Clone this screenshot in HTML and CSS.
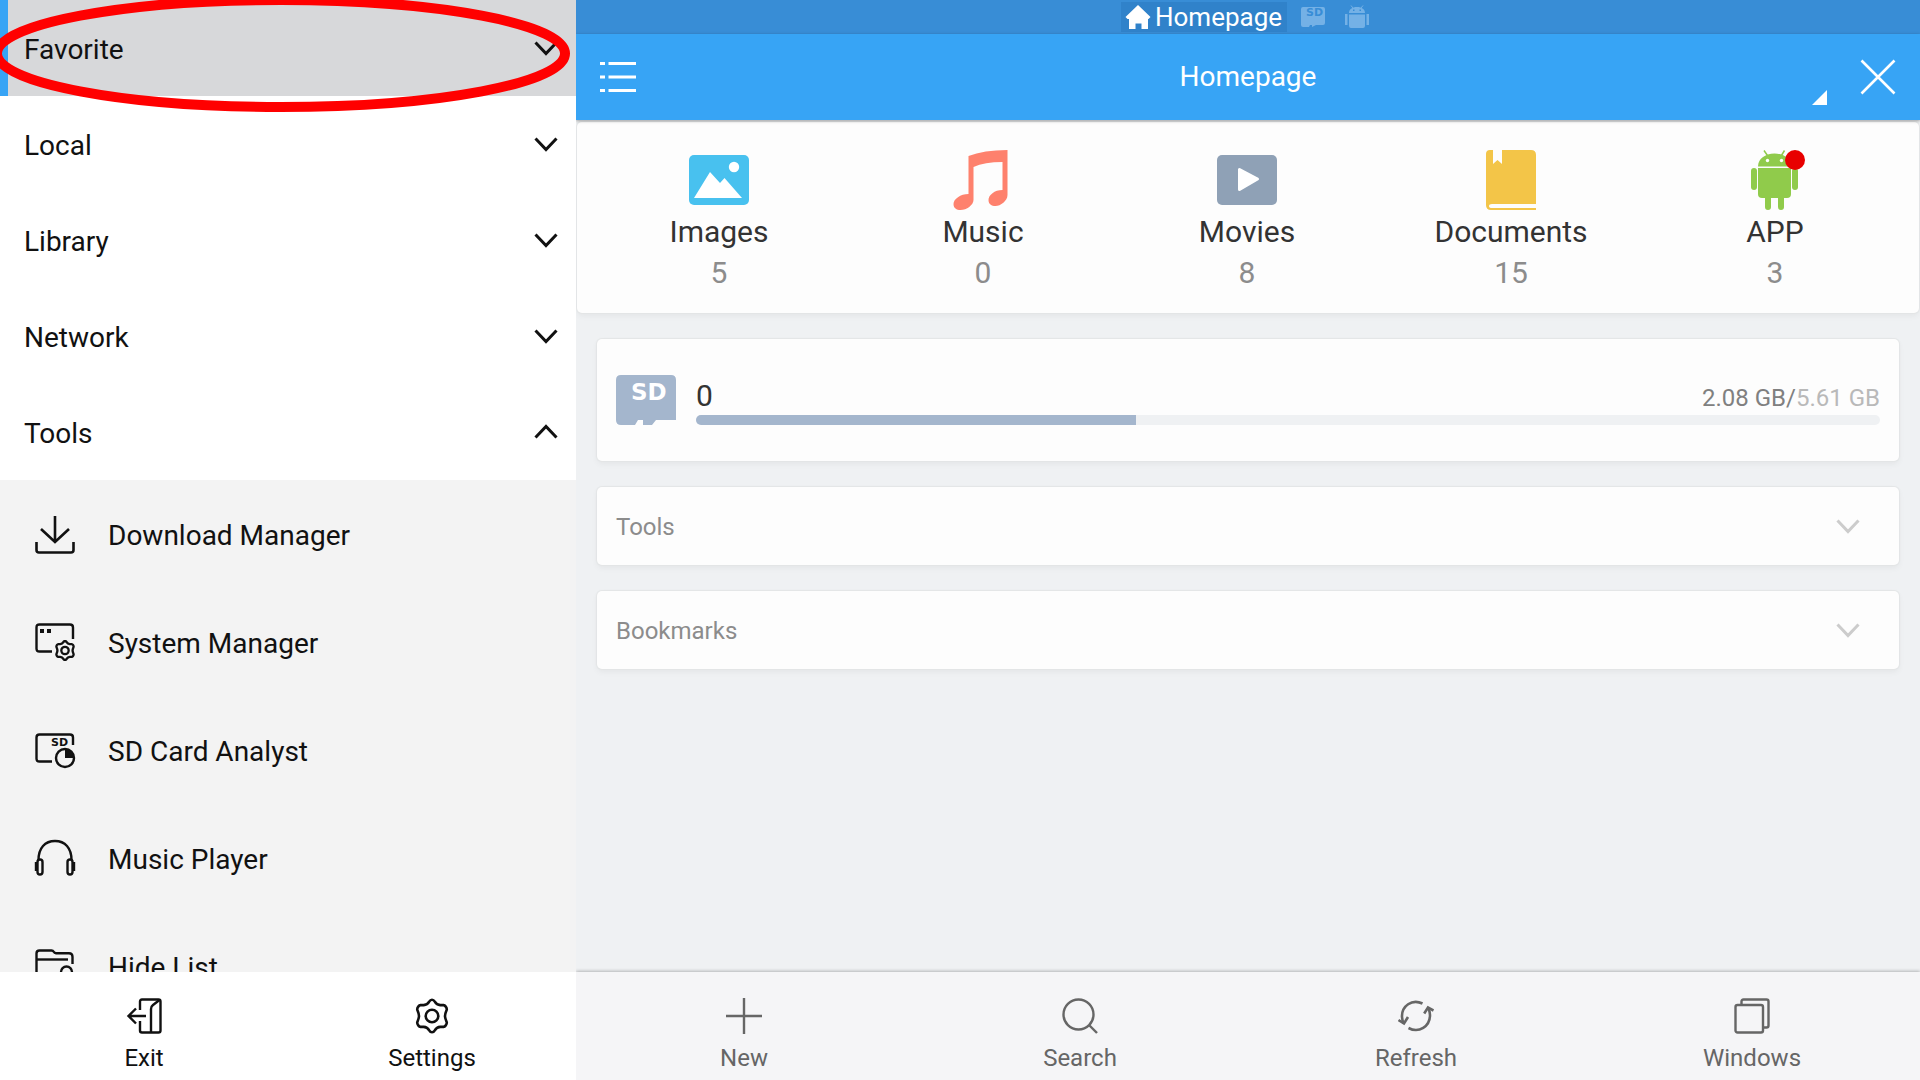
FILE: index.html
```html
<!DOCTYPE html>
<html lang="en">
<head>
<meta charset="utf-8">
<meta name="viewport" content="width=device-width, initial-scale=1">
<title>Homepage</title>
<link rel="stylesheet" href="styles.css">
</head>
<body>
<svg class="defs" aria-hidden="true">
  <symbol id="chevron" viewBox="0 0 24 24"><path d="M1.500 6.500 12 17.500 22.500 6.500" fill="none" stroke="currentColor" stroke-width="3"/></symbol>
  <symbol id="gear" viewBox="0 0 36 36">
    <path d="M18 1.700c1.200 0 2 .6 2.800 2 1.300 2.300 2.700 3.200 5.500 3.400h3.200c1.600.2 3.300 2.500 3.300 4.300 0 1-1.800 3.500-1.800 6.600s1.800 5.600 1.800 6.600c0 1.800-1.700 4.100-3.300 4.300h-3.200c-2.800.2-4.200 1.100-5.500 3.400-.8 1.400-1.600 2-2.800 2s-2-.6-2.800-2c-1.300-2.300-2.700-3.200-5.500-3.400H6.500c-1.600-.2-3.300-2.500-3.300-4.300 0-1 1.800-3.500 1.800-6.600s-1.800-5.600-1.800-6.600c0-1.800 1.700-4.100 3.300-4.300h3.200c2.800-.2 4.200-1.100 5.500-3.400.8-1.400 1.600-2 2.800-2z" fill="none" stroke="currentColor"/>
    <circle cx="18" cy="18" r="6.300" fill="none" stroke="currentColor"/>
  </symbol>
  <symbol id="robot" viewBox="0 0 60 60">
    <path d="M17 0.500 21.500 7M37.500 0.500 33.500 7" stroke="currentColor" stroke-width="1.500"/>
    <path d="M11 16.500C11 9 18 3.500 27.500 3.500S44 9 44 16.500z" fill="currentColor"/>
    <path d="M11 18h33v26q0 4-4 4H15q-4 0-4-4z" fill="currentColor"/>
    <rect x="4" y="18" width="6" height="22" rx="3" fill="currentColor"/>
    <rect x="45" y="18" width="6" height="22" rx="3" fill="currentColor"/>
    <path d="M18 46h6v11a3 3 0 0 1-6 0zM31 46h6v11a3 3 0 0 1-6 0z" fill="currentColor"/>
    <circle class="robot-eye" cx="20.500" cy="10.500" r="1.700"/><circle class="robot-eye" cx="34.500" cy="10.500" r="1.700"/>
  </symbol>
</svg>

<div class="app">
  <aside class="sidebar">
    <nav class="menu" aria-label="Locations">
      <button class="group group-active" type="button"><span>Favorite</span><svg class="chevron"><use href="#chevron"/></svg></button>
      <button class="group" type="button"><span>Local</span><svg class="chevron"><use href="#chevron"/></svg></button>
      <button class="group" type="button"><span>Library</span><svg class="chevron"><use href="#chevron"/></svg></button>
      <button class="group" type="button"><span>Network</span><svg class="chevron"><use href="#chevron"/></svg></button>
      <button class="group" type="button" aria-expanded="true"><span>Tools</span><svg class="chevron chevron-up"><use href="#chevron"/></svg></button>
      <div class="submenu">
        <a class="item" href="#download">
          <svg viewBox="0 0 40 40" fill="none" stroke="currentColor" stroke-width="2.600"><path d="M20 2v26M6 15l14 13 14-13"/><path d="M1.500 28v8q0 2.500 2.500 2.500h32q2.500 0 2.500-2.500v-8"/></svg>
          <span>Download Manager</span>
        </a>
        <a class="item" href="#system">
          <svg viewBox="0 0 40 40" fill="none" stroke="currentColor" stroke-width="2.400"><path d="M17 29.500H4.500q-3 0-3-3v-21q0-3 3-3H35q3 0 3 3V17"/><path d="M5 7h4v4H5zM12 7h4v4h-4z" fill="currentColor" stroke="none"/><use href="#gear" x="19" y="18" width="22" height="21" stroke-width="4"/></svg>
          <span>System Manager</span>
        </a>
        <a class="item" href="#sd-analyst">
          <svg viewBox="0 0 40 40" fill="none" stroke="currentColor" stroke-width="2.400"><path d="M17 31.500H4.500q-3 0-3-3v-21q0-3 3-3H35q3 0 3 3V15"/><circle cx="30" cy="28" r="9"/><path d="M30 19a9 9 0 0 1 9 9h-9z" fill="currentColor" stroke="none"/><text class="sd-text" x="16" y="15.500" font-size="11">SD</text></svg>
          <span>SD Card Analyst</span>
        </a>
        <a class="item" href="#music-player">
          <svg viewBox="0 0 40 40" fill="none" stroke="currentColor" stroke-width="2.400"><path d="M3.500 22C3.500 10 10 3 20 3s16.500 7 16.500 19"/><rect x="2.500" y="21.500" width="5" height="15" rx="2.500"/><rect x="32.500" y="21.500" width="5" height="15" rx="2.500"/><path d="M1 24v9M39 24v9"/></svg>
          <span>Music Player</span>
        </a>
        <a class="item" href="#hide-list">
          <svg viewBox="0 0 40 40" fill="none" stroke="currentColor" stroke-width="2.400"><path d="M20 36.500H4.500q-3 0-3-3V7.500q0-3 3-3h12q1.500 0 2.200 1.300T21 7.200h13q3.500 0 3.500 3.500V18"/><path d="M2 13.500h31"/><path d="M26 29v-3a5.500 5.500 0 0 1 11 0v3"/><rect x="24" y="29" width="15" height="9" rx="1"/></svg>
          <span>Hide List</span>
        </a>
      </div>
    </nav>
    <div class="toolbar toolbar-side">
      <button class="tool" type="button">
        <svg viewBox="0 0 36 36" fill="none" stroke="currentColor" stroke-width="2.400"><path d="M14 12V3.500q0-2 2-2h16.500q2 0 2 2v29q0 2-2 2H16q-2 0-2-2V23"/><path d="M33.500 2 27 7q-2 1.500-2 4v23"/><path d="M20 18H3M10 10.500 2.500 18l7.500 7.500"/></svg>
        <span>Exit</span>
      </button>
      <button class="tool" type="button">
        <svg viewBox="0 0 36 36" stroke-width="2.600"><use href="#gear"/></svg>
        <span>Settings</span>
      </button>
    </div>
    <svg class="marker" viewBox="0 0 576 113" aria-hidden="true"><ellipse cx="281" cy="53.500" rx="284" ry="53.500" fill="none" stroke="#f00" stroke-width="10"/></svg>
  </aside>

  <main class="main">
    <div class="tabs">
      <button class="tab tab-active" type="button">
        <svg viewBox="0 0 24 24"><path d="M12 0 24.500 12l-2 2H22v10h-6.500v-5.500h-6V24H3V14H1.500l-2-2z" fill="#fff"/></svg>
        <span>Homepage</span>
      </button>
      <button class="tab" type="button" aria-label="SD card">
        <svg viewBox="0 0 24 24"><path d="M2 2h20q2 0 2 2v14q0 2-2 2h-7l-4 2v-2H9l-1 2H2q-2 0-2-2V4q0-2 2-2z" fill="currentColor"/><text class="sd-text sd-tab" x="5" y="11" font-size="11">SD</text></svg>
      </button>
      <button class="tab" type="button" aria-label="Apps">
        <svg viewBox="0 0 24 24" fill="currentColor"><path d="M4 8C4 4.500 7 2 12 2s8 2.500 8 6zM4 9.500h16V21q0 2-2 2H6q-2 0-2-2zM0 9h2.500v11H0zM21.500 9H24v11h-2.500z"/><path d="M6 .5 8 3M18 .5 16 3" stroke="currentColor"/><path d="M8 4.500h1.500V6H8zM14.500 4.500H16V6h-1.500z" fill="#388dd6"/></svg>
      </button>
    </div>
    <header class="header">
      <button class="icon-button" type="button" aria-label="Menu">
        <svg viewBox="0 0 36 36" fill="#fff"><path d="M0 3h5v3H0zM8.500 3H36v3H8.500zM0 16.500h5v3H0zM8.500 16.500H36v3H8.500zM0 30h5v3H0zM8.500 30H36v3H8.500z"/></svg>
      </button>
      <h1>Homepage</h1>
      <div class="header-actions">
        <svg class="corner" viewBox="0 0 15 15"><path d="M15 0v15H0z" fill="#fff"/></svg>
        <button class="icon-button" type="button" aria-label="Close">
          <svg viewBox="0 0 36 36"><path d="M1.500 1.500l33 33M34.500 1.500l-33 33" stroke="#fff" stroke-width="2.600"/></svg>
        </button>
      </div>
    </header>

    <div class="content">
      <section class="card categories" aria-label="Categories">
        <a class="category" href="#images">
          <svg viewBox="0 0 60 60"><rect y="5" width="60" height="50" rx="5" fill="#48c1ef"/><path d="M5 48 21 22l10 11 4.500-5L53 48z" fill="#fff"/><circle cx="45" cy="17" r="5.200" fill="#fff"/></svg>
          <span>Images</span><span class="count">5</span>
        </a>
        <a class="category" href="#music">
          <svg viewBox="0 0 60 60"><path d="M15.500 6Q30.500 0 54.500 0v45c0 6-7 11-12 11-4 0-7-2-7-6 0-5 6-10 14-10V12Q31.500 12 20.500 17v33c0 5-7 10-13 10-4 0-7-2-7-6 0-5 7-10 15-10z" fill="#fe816d"/></svg>
          <span>Music</span><span class="count">0</span>
        </a>
        <a class="category" href="#movies">
          <svg viewBox="0 0 60 60"><rect y="5" width="60" height="50" rx="5" fill="#8fa1b6"/><path d="M22.500 19.500v20L40.500 29z" fill="#fff" stroke="#fff" stroke-width="3" stroke-linejoin="round"/></svg>
          <span>Movies</span><span class="count">8</span>
        </a>
        <a class="category" href="#documents">
          <svg viewBox="0 0 60 60"><path d="M9 0h3v14l4.500-4 4.500 4V0h29q5 0 5 5v49H11q-3 0-3 2t3 2h44v2H10q-5 0-5-5V4q0-4 4-4z" fill="#f3c548"/></svg>
          <span>Documents</span><span class="count">15</span>
        </a>
        <a class="category" href="#app">
          <span class="badge-box"><svg><use href="#robot" x="2"/></svg><i class="badge"></i></span>
          <span>APP</span><span class="count">3</span>
        </a>
      </section>

      <div class="stack">
        <section class="card storage">
          <svg class="sd-icon" viewBox="0 0 60 50"><path d="M5 0h50q5 0 5 5v40H40l-4 5h-9v-5h-5l-3 5H5q-5 0-5-5V5q0-5 5-5z" fill="#a4b6cd"/><text class="sd-text" x="15" y="25" font-size="23">SD</text></svg>
          <div class="usage">
            <div class="usage-line"><span class="volume">0</span><span>2.08 GB/<span class="total">5.61 GB</span></span></div>
            <div class="bar" role="progressbar" aria-label="Storage used" aria-valuenow="37"><div class="bar-fill" style="width: 37.200%"></div></div>
          </div>
        </section>
        <button class="card panel" type="button"><span>Tools</span><svg class="chevron"><use href="#chevron"/></svg></button>
        <button class="card panel" type="button"><span>Bookmarks</span><svg class="chevron"><use href="#chevron"/></svg></button>
      </div>
    </div>

    <div class="toolbar toolbar-main">
      <button class="tool" type="button">
        <svg viewBox="0 0 36 36"><path d="M18 0v36M0 18h36" stroke="currentColor" stroke-width="2.400"/></svg>
        <span>New</span>
      </button>
      <button class="tool" type="button">
        <svg viewBox="0 0 36 36" fill="none" stroke="currentColor" stroke-width="2.400"><circle cx="16.500" cy="16.500" r="15"/><path d="M27 27l8 8"/></svg>
        <span>Search</span>
      </button>
      <button class="tool" type="button">
        <svg viewBox="0 0 36 36" fill="none" stroke="currentColor" stroke-width="2.600"><path d="M24.500 5.500C14 .5 3.500 8 4 19q.2 3.500 1.700 6.500"/><path d="M.5 22l5.500 3.500 4-6.500"/><path d="M10.500 30C21 35.500 32 28.500 32 17q0-3.500-1.700-6.500"/><path d="M35.500 12.500 30 9.500l-3.800 6"/></svg>
        <span>Refresh</span>
      </button>
      <button class="tool" type="button">
        <svg viewBox="0 0 36 36" fill="none" stroke="currentColor" stroke-width="2.400"><rect x="1.500" y="7" width="27.500" height="27.500" rx="2"/><path d="M7.500 7V3.500q0-2 2-2h23q2 0 2 2v24q0 2-2 2H29"/></svg>
        <span>Windows</span>
      </button>
    </div>
  </main>
</div>
</body>
</html>
```
FILE: styles.css
```css
*, *::before, *::after { box-sizing: border-box; }

body {
  margin: 0;
  font-family: Roboto, "Liberation Sans", sans-serif;
  font-size: 28px;
  color: #111;
}

button {
  margin: 0;
  padding: 0;
  border: 0;
  background: none;
  font: inherit;
  color: inherit;
  text-align: left;
}

a { color: inherit; text-decoration: none; }
svg { display: block; flex-shrink: 0; }

.defs { position: absolute; width: 0; height: 0; }

.app {
  display: grid;
  grid-template-columns: 30% 1fr;
  height: 100vh;
}

/* Sidebar */
.sidebar {
  position: relative;
  display: flex;
  flex-direction: column;
  min-height: 0;
  background: #fff;
}

.menu {
  flex: 1;
  min-height: 0;
  overflow: hidden;
}

.group {
  display: flex;
  align-items: center;
  justify-content: space-between;
  width: 100%;
  height: 96px;
  padding: 0 18px 0 24px;
}

.group-active {
  padding-left: 16px;
  border-left: 8px solid #37a4f5;
  background: #d7d8da;
}

.group > span,
.item > span,
.panel > span { padding-top: 2px; }

.chevron { width: 24px; height: 24px; }
.chevron-up { transform: rotate(180deg); }

.submenu { background: #f3f3f3; }

.item {
  display: flex;
  align-items: center;
  gap: 33px;
  height: 108px;
  padding-left: 35px;
}

.item > svg { width: 40px; height: 40px; overflow: visible; }

.sd-text {
  font-family: "DejaVu Sans", sans-serif;
  font-weight: bold;
  fill: currentColor;
  stroke: none;
}

.marker {
  position: absolute;
  top: 0;
  left: 0;
  width: 100%;
  pointer-events: none;
}

/* Bottom bars */
.toolbar { display: flex; flex-shrink: 0; }

.tool {
  display: flex;
  flex: 1;
  flex-direction: column;
  align-items: center;
  gap: 10px;
  padding: 26px 0 8px;
  font-size: 24px;
  line-height: 28px;
}

.tool svg { width: 36px; height: 36px; }

.toolbar-main {
  background: #f5f5f7;
  box-shadow: 0 -1px 3px rgba(0, 0, 0, 0.25);
  color: #666;
}

/* Main area */
.main {
  display: flex;
  flex-direction: column;
  min-width: 0;
  min-height: 0;
  overflow: hidden;
  background: #eff1f3;
}

.tabs {
  display: flex;
  align-items: center;
  justify-content: center;
  gap: 8px;
  height: 34px;
  background: #388dd6;
  color: #74b1e6;
  font-size: 26px;
  line-height: 30px;
}

.tab {
  display: flex;
  align-items: center;
  gap: 5px;
  padding: 0 6px;
}

.tab svg { width: 24px; height: 24px; overflow: visible; }

.tab-active {
  padding: 0 5px;
  background: #3082ca;
  color: #fff;
}

.sd-tab { fill: #388dd6; }

.header {
  position: relative;
  z-index: 1;
  display: grid;
  grid-template-columns: 1fr auto 1fr;
  align-items: center;
  height: 86px;
  padding: 0 24px;
  background: #37a4f5;
  box-shadow: 0 1px 3px rgba(0, 0, 0, 0.35);
  color: #fff;
}

.header h1 {
  margin: 0;
  padding-bottom: 2px;
  font-size: 28px;
  font-weight: normal;
}

.icon-button svg { width: 36px; height: 36px; }

.header-actions {
  display: flex;
  align-items: flex-end;
  justify-content: flex-end;
  gap: 33px;
}

.corner { width: 15px; height: 15px; margin-bottom: -10px; }

.content { flex: 1; min-height: 0; padding: 2px 1px; }

.card {
  border-radius: 5px;
  background: #fdfdfd;
  box-shadow: 0 0 1px 1px #e3e5e6, 0 3px 6px rgba(0, 0, 0, 0.05);
}

.categories {
  display: grid;
  grid-template-columns: repeat(5, 1fr);
  padding: 28px 12px 20px 10px;
}

.category {
  display: flex;
  flex-direction: column;
  align-items: center;
  color: #333;
  font-size: 30px;
  line-height: 41px;
}

.category svg { width: 60px; height: 60px; margin-bottom: 1px; }
.count { color: #8c8c8c; }

.badge-box { position: relative; color: #90cb4b; }
.robot-eye { fill: #fff; }

.badge {
  position: absolute;
  top: 0;
  right: 0;
  width: 20px;
  height: 20px;
  border-radius: 50%;
  background: #e80000;
}

.stack {
  display: flex;
  flex-direction: column;
  gap: 26px;
  padding: 26px 20px;
}

.storage {
  display: flex;
  align-items: flex-start;
  gap: 20px;
  padding: 36px 19px;
}

.sd-icon { width: 60px; height: 50px; color: #fff; }
.usage { flex: 1; }

.usage-line {
  display: flex;
  align-items: baseline;
  justify-content: space-between;
  height: 40px;
  color: #808080;
  font-size: 24px;
  line-height: 42px;
}

.volume { color: #333; font-size: 30px; }
.total { color: #b9b9b9; }

.bar {
  height: 10px;
  overflow: hidden;
  border-radius: 5px;
  background: #eff1f3;
}

.bar-fill { height: 100%; background: #a4b6cd; }

.panel {
  display: flex;
  align-items: center;
  justify-content: space-between;
  height: 78px;
  padding: 0 39px 0 19px;
  color: #8c8c8c;
  font-size: 24px;
}

.panel .chevron { color: #ccc; }
```
